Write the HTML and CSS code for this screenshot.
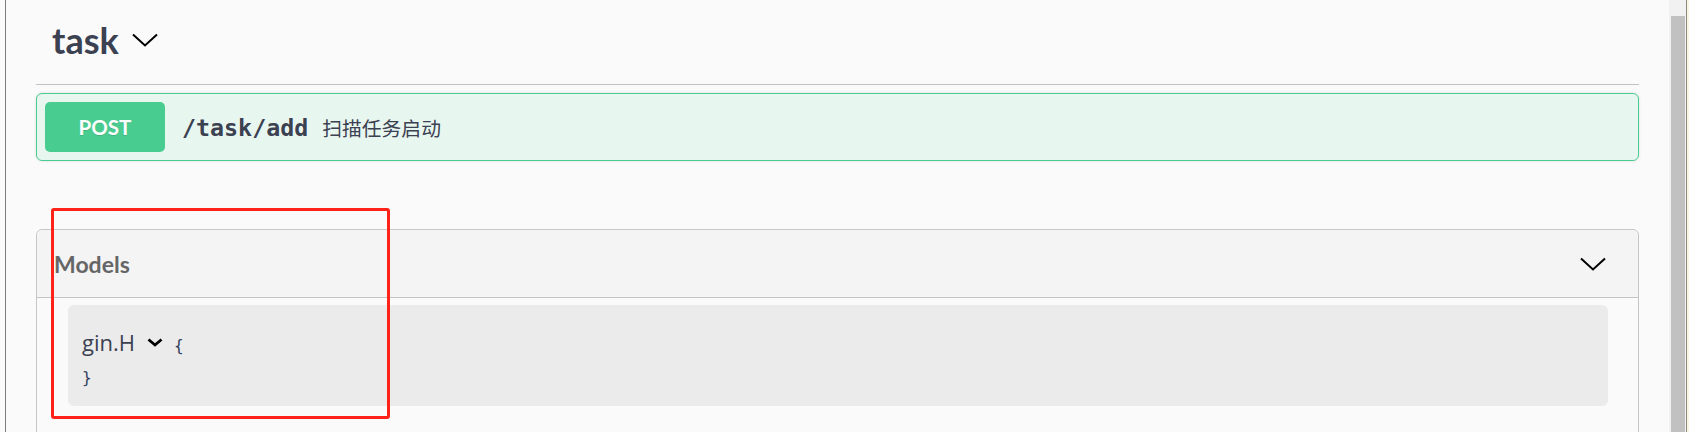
FILE: index.html
```html
<!DOCTYPE html>
<html lang="zh-CN">
<head>
<meta charset="utf-8">
<title>task</title>
<link rel="stylesheet" href="styles.css">
</head>
<body>
<div class="window">
  <div class="gutter"></div>
  <main class="page">
    <div class="tag-section">
      <h3 class="tag-title">
        <span class="tag-name">task</span>
        <svg class="tag-arrow" width="26" height="14" viewBox="0 0 26 14"><path d="M1 1.5 L13 12.5 L25 1.5" fill="none" stroke="#000" stroke-width="2"/></svg>
      </h3>
      <div class="opblock">
        <span class="method">POST</span>
        <span class="path">/task/add</span>
        <span class="desc">扫描任务启动</span>
      </div>
    </div>
    <section class="models">
      <h4 class="models-head">
        <span class="models-title">Models</span>
        <svg class="models-arrow" width="26" height="14" viewBox="0 0 26 14"><path d="M1 1.5 L13 12.5 L25 1.5" fill="none" stroke="#000" stroke-width="2"/></svg>
      </h4>
      <div class="models-body">
        <div class="model-container">
          <div class="model-line">
            <span class="model-title">gin.H</span>
            <svg class="model-toggle" width="16" height="9" viewBox="0 0 16 9"><path d="M1.5 1.5 L8 7 L14.5 1.5" fill="none" stroke="#000" stroke-width="2.8"/></svg>
            <span class="brace">{</span>
          </div>
          <div class="model-line close">
            <span class="brace">}</span>
          </div>
        </div>
      </div>
    </section>
  </main>
  <div class="scrollbar"><div class="thumb"></div></div>
  <div class="edge"></div>
  <div class="annotation"></div>
</div>
</body>
</html>
```

FILE: styles.css
```css
* { box-sizing: border-box; }
html, body { margin: 0; padding: 0; }
body {
  background: #fafafa;
  font-family: "Lato", "Noto Sans", sans-serif;
  color: #3b4151;
}
.window {
  position: relative;
  display: flex;
  width: 1689px;
  height: 432px;
  overflow: hidden;
  background: #fafafa;
}
.gutter {
  width: 5px;
  flex: none;
}
.page {
  flex: none;
  width: 1664px;
  border-left: 1px solid #7c7c7c;
  padding: 0 30px;
}
.tag-title {
  margin: 0;
  display: flex;
  align-items: center;
  height: 85px;
  padding: 22px 0 26px 16px;
  border-bottom: 1px solid #c2c2c2;
  font-weight: 700;
}
.tag-name {
  font-family: "Lato", sans-serif;
  font-size: 36px;
  line-height: 36px;
  font-weight: 700;
  color: #3b4151;
}
.tag-arrow {
  margin-left: 13px;
  display: block;
}
.opblock {
  margin-top: 8px;
  height: 68px;
  display: flex;
  align-items: center;
  padding: 0 8px;
  border: 1px solid #49cc90;
  border-radius: 6px;
  background: #e8f6f0;
  box-shadow: 0 0 3px rgba(0,0,0,0.12);
}
.method {
  width: 120px;
  height: 50px;
  flex: none;
  display: flex;
  align-items: center;
  justify-content: center;
  background: #49cc90;
  border-radius: 5px;
  color: #fff;
  font-family: "Lato", sans-serif;
  font-weight: 700;
  font-size: 20.5px;
  text-shadow: 0 1px 0 rgba(0,0,0,0.12);
}
.path {
  margin-left: 17px;
  font-family: "DejaVu Sans Mono", monospace;
  font-weight: 700;
  font-size: 23.3px;
  color: #3b4151;
}
.desc {
  margin-left: 14px;
  font-family: "Noto Sans CJK SC", sans-serif;
  font-size: 19.8px;
  color: #3b4151;
}
.models {
  margin-top: 68px;
  border: 1px solid #c6c6c6;
  border-radius: 6px;
  height: 260px;
}
.models-head {
  margin: 0;
  height: 68px;
  display: flex;
  align-items: center;
  justify-content: space-between;
  padding: 0 32px 0 17px;
  background: #f4f4f4;
  border-bottom: 1px solid #c4c4c4;
  border-radius: 6px 6px 0 0;
}
.models-title {
  font-family: "Lato", sans-serif;
  font-weight: 700;
  font-size: 23px;
  line-height: 24px;
  color: #666;
}
.models-arrow { display: block; }
.models-body {
  padding: 7px 30px 0 31px;
}
.model-container {
  background: #ebebeb;
  border-radius: 6px;
  height: 101px;
  padding: 19px 15px 0 14px;
}
.model-line {
  height: 36px;
  line-height: 36px;
  font-family: "Open Sans", sans-serif;
  font-size: 22px;
  display: flex;
  align-items: baseline;
  white-space: nowrap;
}
.model-title {
  font-family: "Open Sans", sans-serif;
  font-size: 22px;
  color: #3b4151;
}
.model-toggle {
  margin-left: 12px;
  align-self: center;
}
.brace {
  margin-left: 11px;
  font-family: "DejaVu Sans Mono", monospace;
  font-size: 16px;
  color: #33405e;
}
.close .brace { margin-left: 0; }
.scrollbar {
  width: 17px;
  flex: none;
  background: #f1f1f1;
  padding: 16px 1px 0 2px;
}
.thumb {
  height: 100%;
  background: #c1c1c1;
}
.edge {
  width: 3px;
  flex: none;
  border-left: 1px solid #8e8a80;
  background: #f9f3e2;
}
.annotation {
  position: absolute;
  left: 51px;
  top: 208px;
  width: 339px;
  height: 211px;
  border: 3px solid #ff2219;
  border-radius: 3px;
}
```
